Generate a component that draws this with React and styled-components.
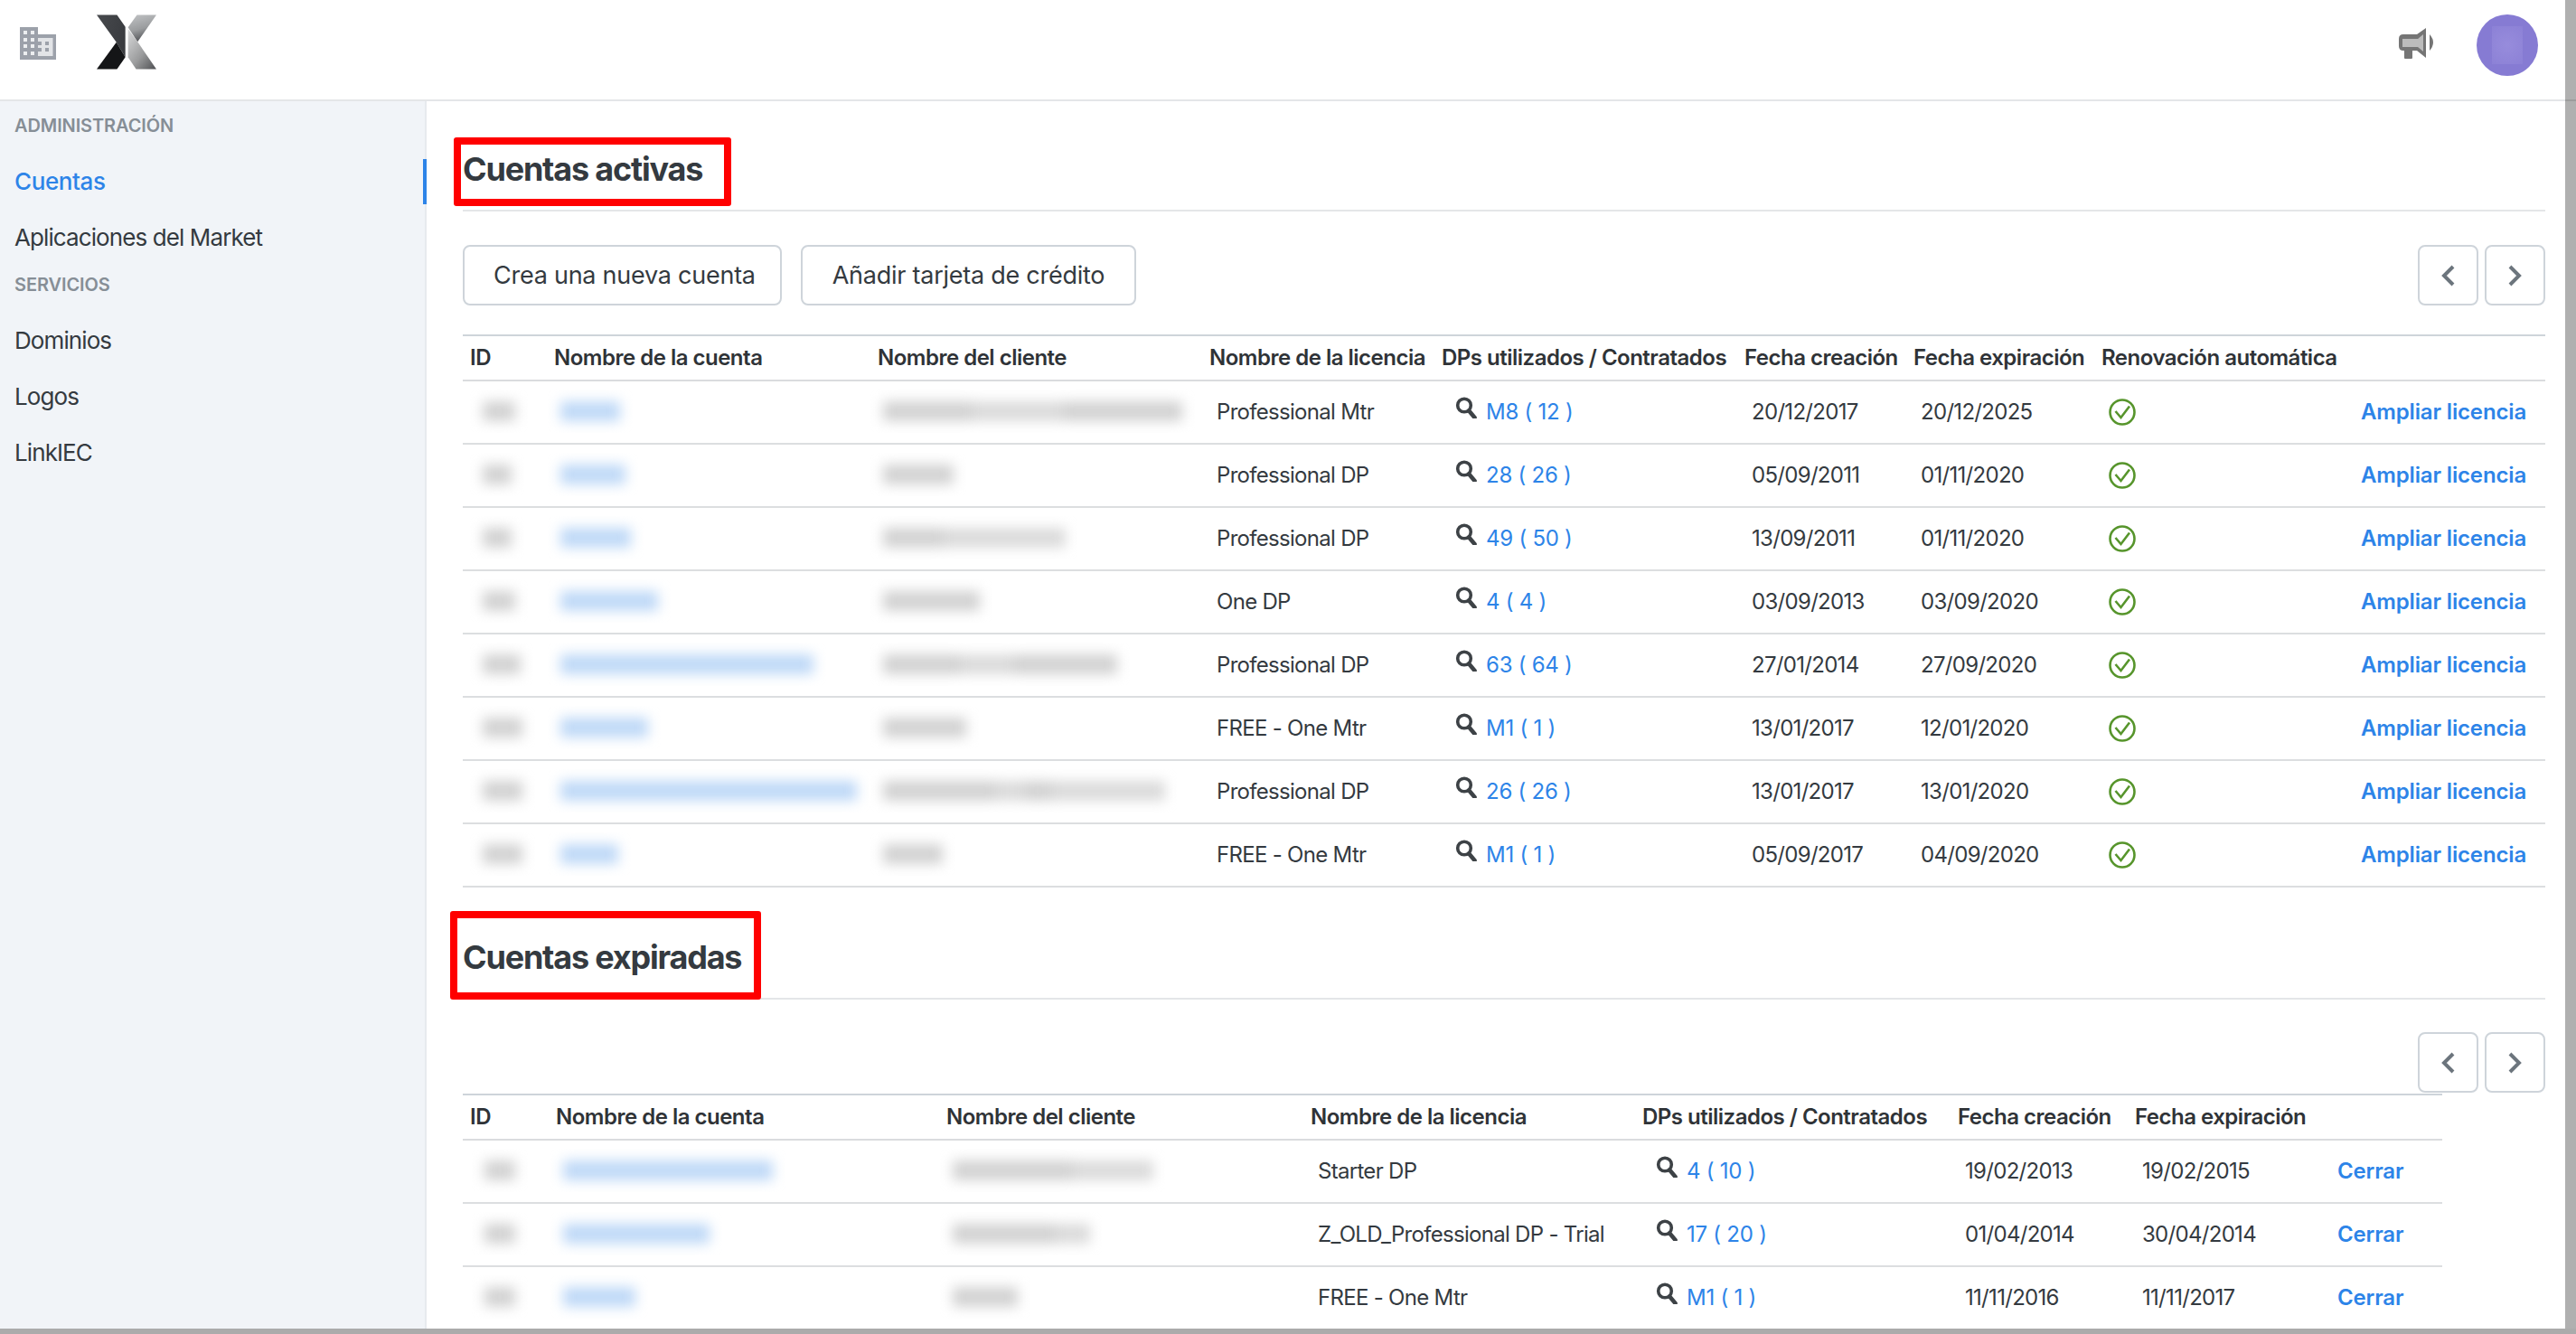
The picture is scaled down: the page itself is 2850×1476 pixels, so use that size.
import React from "react";
import styled, { createGlobalStyle } from "styled-components";

const Global = createGlobalStyle`
  html, body { margin: 0; padding: 0; width: 2850px; height: 1476px; overflow: hidden; background: #fff; }
  * { box-sizing: border-box; }
  body { font-family: Inter, "Liberation Sans", sans-serif; color: #343a40; }
`;

const Frame = styled.div`
  width: 2850px; height: 1476px; display: grid;
  grid-template-columns: 2838px 12px; grid-template-rows: 1470px 6px;
  overflow: hidden; background: #b0b0b0;
`;
const Page = styled.div`display: flex; flex-direction: column; overflow: hidden; background: #fff;`;
const ScrollEdge = styled.div`
  background: linear-gradient(#b0b0b0 0 110px, #9c9c9c 110px 112px, #b0b0b0 112px);
`;
const BottomEdge = styled.div`grid-column: 1 / 3; background: #ababab;`;

const Header = styled.header`
  height: 112px; flex: none; display: flex; align-items: flex-start; justify-content: space-between;
  border-bottom: 2px solid #e4e6e8; background: #fff;
`;
const Brand = styled.div`display: flex; align-items: flex-start; padding: 16px 0 0 22px;`;
const BuildingIcon = styled.svg`width: 40px; height: 36px; margin-top: 14px; margin-right: 45px; flex: none;`;
const Logo = styled.svg`width: 66px; height: 61px; flex: none;`;
const HeaderRight = styled.div`display: flex; align-items: flex-start; padding-top: 16px; padding-right: 30px;`;
const Megaphone = styled.svg`width: 40px; height: 35px; margin-top: 15px; margin-right: 46px; flex: none;`;
const Avatar = styled.div`
  width: 68px; height: 68px; border-radius: 50%; background: #867bd3;
  display: flex; align-items: center; justify-content: center; overflow: hidden;
`;
const AvatarBlur = styled.div`
  width: 34px; height: 42px;
  background: radial-gradient(circle, #978cdc 0%, #8c81d6 100%);
`;

const Body = styled.div`display: flex; flex: 1; min-height: 0;`;
const Sidebar = styled.nav`
  width: 472px; flex: none; background: #f1f4f8; border-right: 2px solid #e7eaee;
  padding-top: 6px;
`;
const NavLabel = styled.div`
  height: 42px; padding-left: 16px; display: flex; align-items: center; margin-bottom: 10px;
  font-size: 20px; font-weight: 600; color: #868e96; letter-spacing: -0.1px;
`;
const NavItem = styled.a`
  height: 62px; display: flex; align-items: center; padding: 0 0 2px 16px; position: relative;
  font-size: 26px; font-weight: ${p => (p.$active ? 500 : 400)};
  letter-spacing: ${p => (p.$active ? "-0.4px" : "-0.9px")};
  color: ${p => (p.$active ? "#2d84e8" : "#343a40")};
  &::after {
    content: ${p => (p.$active ? '""' : "none")};
    position: absolute; right: -2px; top: 6px; bottom: 6px; width: 4px; background: #2d84e8;
  }
`;

const Main = styled.main`flex: 1; min-width: 0; padding: 53px 22px 0 40px;`;
const Section = styled.section`& + & { margin-top: 55px; }`;
const TitleBar = styled.div`
  position: relative; padding-bottom: 23px; border-bottom: 2px solid #e4e6e8;
`;
const Title = styled.h2`
  margin: 0; font-size: 36px; line-height: 44px; font-weight: 700; color: #343a40; letter-spacing: -1.2px;
`;
const RedMark = styled.div`
  position: absolute; left: ${p => p.$left}px; top: ${p => p.$top}px;
  width: ${p => p.$w}px; height: ${p => p.$h}px;
  border: 8px solid #ff0000; border-radius: 3px;
`;
const Toolbar = styled.div`
  display: flex; justify-content: space-between; align-items: center;
  margin-top: ${p => p.$top}px; margin-bottom: ${p => p.$bottom}px; height: 67px;
`;
const Actions = styled.div`display: flex; gap: 21px; height: 100%;`;
const Button = styled.button`
  font: 400 27px Inter, "Liberation Sans", sans-serif; color: #343a40; background: #fff; letter-spacing: -0.25px;
  border: 2px solid #ced4da; border-radius: 8px; padding: 0 32px; height: 100%;
  width: ${p => p.$w}px; white-space: nowrap;
`;
const Pager = styled.div`display: flex; gap: 7px; height: 100%;`;
const PageButton = styled.button`
  width: 67px; height: 100%; background: #fff; border: 2px solid #ced4da; border-radius: 8px;
  display: flex; align-items: center; justify-content: center; padding: 0;
`;
const Chevron = styled.svg`width: 17px; height: 24px;`;

const Table = styled.table`
  width: ${p => p.$w}px; table-layout: fixed; border-collapse: separate; border-spacing: 0;
`;
const Th = styled.th`
  height: 52px; padding: 0 0 2px 8px; text-align: left; white-space: nowrap;
  font-size: 24px; font-weight: 600; color: #2f3337; letter-spacing: -0.5px;
  border-top: 2px solid #ced4da; border-bottom: 2px solid #dadcde;
`;
const Td = styled.td`
  height: 70px; padding: 0 0 2px ${p => p.$pad ?? 16}px; white-space: nowrap;
  font-size: 24px; font-weight: 400; color: #343a40; letter-spacing: -0.7px;
  border-bottom: 2px solid #dcdee0; vertical-align: middle;
`;
const BlurBox = styled.div`
  display: block; height: 48px; width: ${p => p.$w}px; padding: 13px 14px; overflow: hidden;
`;
const BlurBar = styled.div`
  height: 100%; display: flex; filter: blur(7px);
`;
const BlurWord = styled.div`
  flex: ${p => p.$grow}; background: ${p => p.$color};
  &:nth-child(even) { opacity: 0.8; }
`;
const LinkText = styled.a`color: #2d84e8; font-size: 24px; font-weight: 400; letter-spacing: -0.25px;`;
const Strong = styled.a`color: #2d84e8; font-size: 24px; font-weight: 600; letter-spacing: -0.15px;`;
const DpWrap = styled.div`display: flex; align-items: center;`;
const SearchIcon = styled.svg`width: 24px; height: 24px; margin: 0 10px 8px 7px; flex: none;`;
const CheckIcon = styled.svg`width: 30px; height: 30px; display: block; margin-top: 2px;`;

const Blur = ({ w, color, words = [1] }) => (
  <BlurBox $w={w}>
    <BlurBar>
      {words.map((g, i) => <BlurWord key={i} $grow={g} $color={color} />)}
    </BlurBar>
  </BlurBox>
);

const GREY = "#d2d2d2";
const BLUE = "#bfd9f7";

const active = [
  { id: 64, nw: 94, cw: 359, cwords: [3, 3, 4], lic: "Professional Mtr", dp: "M8 ( 12 )", c: "20/12/2017", e: "20/12/2025" },
  { id: 60, nw: 100, cw: 106, lic: "Professional DP", dp: "28 ( 26 )", c: "05/09/2011", e: "01/11/2020" },
  { id: 60, nw: 106, cw: 230, cwords: [2, 4], lic: "Professional DP", dp: "49 ( 50 )", c: "13/09/2011", e: "01/11/2020" },
  { id: 64, nw: 136, cw: 135, lic: "One DP", dp: "4 ( 4 )", c: "03/09/2013", e: "03/09/2020" },
  { id: 70, nw: 308, cw: 287, cwords: [3, 2, 4], lic: "Professional DP", dp: "63 ( 64 )", c: "27/01/2014", e: "27/09/2020" },
  { id: 72, nw: 125, cw: 120, lic: "FREE - One Mtr", dp: "M1 ( 1 )", c: "13/01/2017", e: "12/01/2020" },
  { id: 72, nw: 356, cw: 340, cwords: [4, 1, 1, 4], lic: "Professional DP", dp: "26 ( 26 )", c: "13/01/2017", e: "13/01/2020" },
  { id: 72, nw: 92, cw: 94, lic: "FREE - One Mtr", dp: "M1 ( 1 )", c: "05/09/2017", e: "04/09/2020" },
];
const expired = [
  { id: 62, nw: 260, cw: 250, cwords: [3, 2], lic: "Starter DP", dp: "4 ( 10 )", c: "19/02/2013", e: "19/02/2015" },
  { id: 62, nw: 190, cw: 180, cwords: [3, 1], lic: "Z_OLD_Professional DP - Trial", dp: "17 ( 20 )", c: "01/04/2014", e: "30/04/2014" },
  { id: 62, nw: 108, cw: 100, lic: "FREE - One Mtr", dp: "M1 ( 1 )", c: "11/11/2016", e: "11/11/2017" },
];

const Search = () => (
  <SearchIcon viewBox="0 0 24 24" fill="none" stroke="#3d4246">
    <circle cx="10" cy="9.5" r="7.3" strokeWidth="3.6" />
    <path d="M15.2 15.5 L21.5 23" strokeWidth="4.6" strokeLinecap="round" />
  </SearchIcon>
);
const Check = () => (
  <CheckIcon viewBox="0 0 30 30" fill="none" stroke="#57952c">
    <circle cx="15" cy="15" r="13.5" strokeWidth="2.6" />
    <path d="M7.5 14 L13.5 21 L23 8.5" strokeWidth="2.6" />
  </CheckIcon>
);
const Prev = () => (
  <Chevron viewBox="0 0 17 24" fill="none" stroke="#6c757d">
    <path d="M14 2 L4 12 L14 22" strokeWidth="4" />
  </Chevron>
);
const Next = () => (
  <Chevron viewBox="0 0 17 24" fill="none" stroke="#6c757d">
    <path d="M3 2 L13 12 L3 22" strokeWidth="4" />
  </Chevron>
);

const Building = () => (
  <BuildingIcon viewBox="0 0 40 36">
    <rect x="20" y="8" width="20" height="28" fill="#9ca1aa" />
    <rect x="20" y="12" width="16.5" height="20" fill="#e2e4e7" />
    <rect x="0" y="0" width="20" height="36" fill="#9ca1aa" />
    {[4, 12].map(x => [4, 12, 19, 27].map(y => <rect key={x + "-" + y} x={x} y={y} width="4" height="4" fill="#eceef0" />))}
    {[20, 28].map(x => [16, 23].map(y => <rect key={x + "-" + y} x={x} y={y} width="4" height="4" fill="#9ca1aa" />))}
  </BuildingIcon>
);
const LogoMark = () => (
  <Logo viewBox="320 48 200 182">
    <defs>
      <linearGradient id="lg1" x1="0" y1="0" x2="1" y2="0.4">
        <stop offset="0" stopColor="#47494d" /><stop offset="1" stopColor="#3a3c40" />
      </linearGradient>
      <linearGradient id="lg2" x1="0" y1="0" x2="0.3" y2="1">
        <stop offset="0" stopColor="#c2c4c6" /><stop offset="0.6" stopColor="#9a9c9e" /><stop offset="1" stopColor="#55575a" />
      </linearGradient>
      <linearGradient id="lg3" x1="0" y1="0" x2="0.9" y2="1">
        <stop offset="0" stopColor="#dadbdc" /><stop offset="0.6" stopColor="#9a9b9c" /><stop offset="1" stopColor="#555659" />
      </linearGradient>
    </defs>
    <path d="M320 48 H388 L416 88 V190 L386 140 Z" fill="url(#lg1)" />
    <path d="M386 140 L416 190 L388 230 H320 Z" fill="#141517" />
    <path d="M520 48 H455 L425 90 L457 138 Z" fill="url(#lg2)" />
    <path d="M425 95 L457 138 L520 230 H452 L425 190 Z" fill="url(#lg3)" />
  </Logo>
);
const Horn = () => (
  <Megaphone viewBox="0 0 40 35">
    <path d="M5 7 H20 L30 0 V33 L20 25 H15 V33 Q15 34 14 34 H7 Q6 34 6 33 V25 H5 Q0 25 0 20 V12 Q0 7 5 7 Z" fill="#757575" />
    <path d="M4 12 H21 L27 7 V26 L21 21 H4 Z" fill="#bcbcbc" />
    <path d="M34 7 Q42 16 34 25 Z" fill="#757575" />
  </Megaphone>
);

const activeCols = [93, 358, 367, 257, 335, 187, 208, 279, 220];
const expiredCols = [95, 432, 403, 367, 349, 196, 216, 132];

const Head = ({ cols, labels }) => (
  <>
    <colgroup>{cols.map((c, i) => <col key={i} width={c} />)}</colgroup>
    <thead>
      <tr>{labels.map((l, i) => <Th key={i}>{l}</Th>)}</tr>
    </thead>
  </>
);

export default function App() {
  return (
    <Frame>
      <Global />
      <Page>
        <Header>
          <Brand><Building /><LogoMark /></Brand>
          <HeaderRight><Horn /><Avatar><AvatarBlur /></Avatar></HeaderRight>
        </Header>
        <Body>
          <Sidebar>
            <NavLabel>ADMINISTRACIÓN</NavLabel>
            <NavItem $active>Cuentas</NavItem>
            <NavItem>Aplicaciones del Market</NavItem>
            <NavLabel>SERVICIOS</NavLabel>
            <NavItem>Dominios</NavItem>
            <NavItem>Logos</NavItem>
            <NavItem>LinkIEC</NavItem>
          </Sidebar>
          <Main>
            <Section>
              <TitleBar>
                <Title>Cuentas activas</Title>
                <RedMark $left={-10} $top={-13} $w={307} $h={76} />
              </TitleBar>
              <Toolbar $top={37} $bottom={32}>
                <Actions>
                  <Button $w={353}>Crea una nueva cuenta</Button>
                  <Button $w={371}>Añadir tarjeta de crédito</Button>
                </Actions>
                <Pager>
                  <PageButton><Prev /></PageButton>
                  <PageButton><Next /></PageButton>
                </Pager>
              </Toolbar>
              <Table $w={2304}>
                <Head cols={activeCols} labels={["ID", "Nombre de la cuenta", "Nombre del cliente", "Nombre de la licencia", "DPs utilizados / Contratados", "Fecha creación", "Fecha expiración", "Renovación automática", ""]} />
                <tbody>
                  {active.map((r, i) => (
                    <tr key={i}>
                      <Td $pad={8}><Blur w={r.id} color={GREY} /></Td>
                      <Td $pad={1}><Blur w={r.nw} color={BLUE} /></Td>
                      <Td $pad={0}><Blur w={r.cw} color={GREY} words={r.cwords} /></Td>
                      <Td>{r.lic}</Td>
                      <Td><DpWrap><Search /><LinkText>{r.dp}</LinkText></DpWrap></Td>
                      <Td>{r.c}</Td>
                      <Td>{r.e}</Td>
                      <Td><Check /></Td>
                      <Td><Strong>Ampliar licencia</Strong></Td>
                    </tr>
                  ))}
                </tbody>
              </Table>
            </Section>
            <Section>
              <TitleBar>
                <Title>Cuentas expiradas</Title>
                <RedMark $left={-14} $top={-29} $w={344} $h={98} />
              </TitleBar>
              <Toolbar $top={36} $bottom={1}>
                <span />
                <Pager>
                  <PageButton><Prev /></PageButton>
                  <PageButton><Next /></PageButton>
                </Pager>
              </Toolbar>
              <Table $w={2190}>
                <Head cols={expiredCols} labels={["ID", "Nombre de la cuenta", "Nombre del cliente", "Nombre de la licencia", "DPs utilizados / Contratados", "Fecha creación", "Fecha expiración", ""]} />
                <tbody>
                  {expired.map((r, i) => (
                    <tr key={i}>
                      <Td $pad={10}><Blur w={r.id} color={GREY} /></Td>
                      <Td $pad={2}><Blur w={r.nw} color={BLUE} /></Td>
                      <Td $pad={1}><Blur w={r.cw} color={GREY} words={r.cwords} /></Td>
                      <Td>{r.lic}</Td>
                      <Td><DpWrap><Search /><LinkText>{r.dp}</LinkText></DpWrap></Td>
                      <Td>{r.c}</Td>
                      <Td>{r.e}</Td>
                      <Td><Strong>Cerrar</Strong></Td>
                    </tr>
                  ))}
                </tbody>
              </Table>
            </Section>
          </Main>
        </Body>
      </Page>
      <ScrollEdge />
      <BottomEdge />
    </Frame>
  );
}
